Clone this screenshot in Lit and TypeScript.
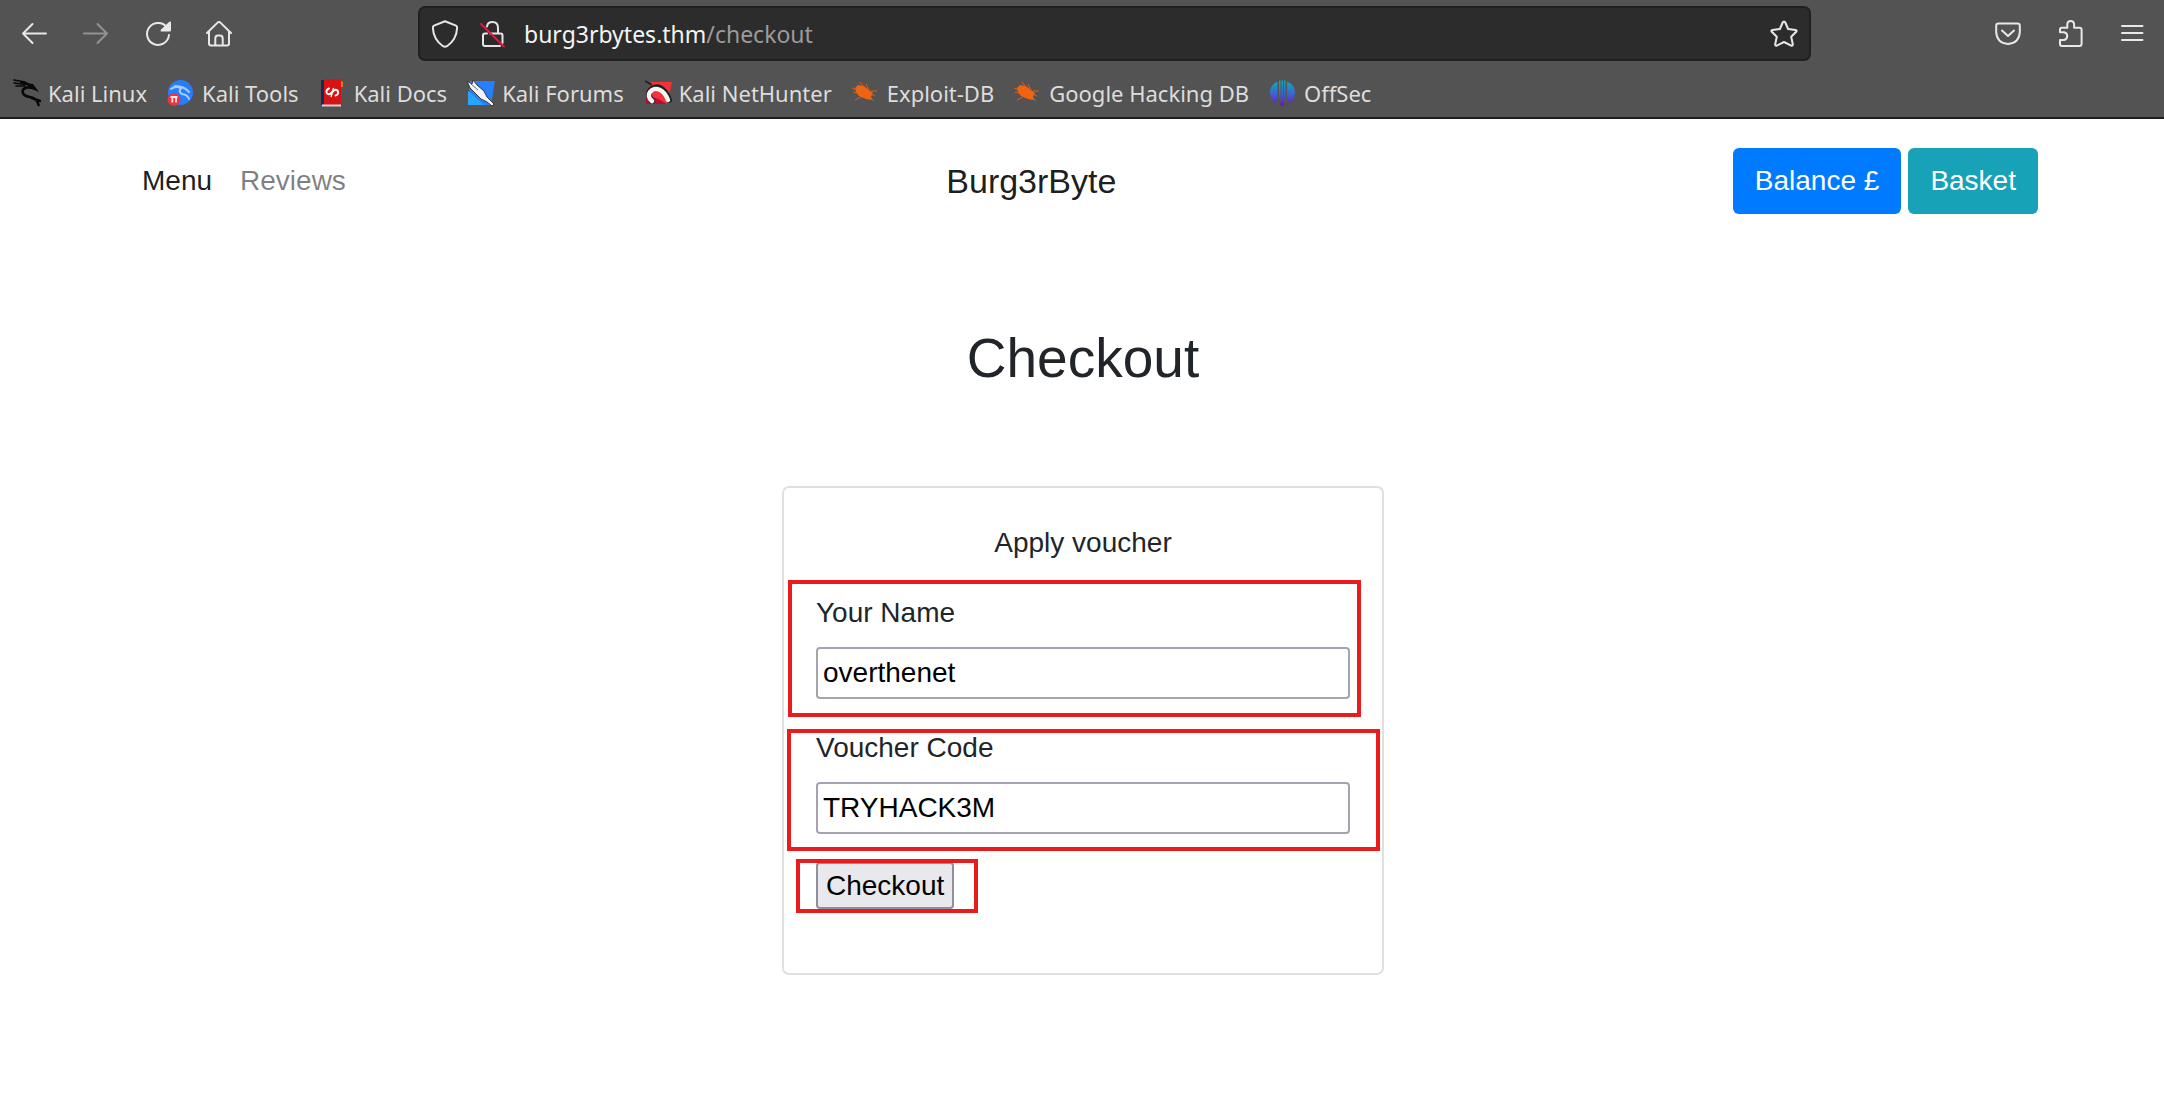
import { LitElement, html, css, svg, TemplateResult } from "lit";
import { customElement, property } from "lit/decorators.js";

const icons: Record<string, TemplateResult> = {
  back: svg`<path d="M27 14.5H4M13.5 5L4 14.5L13.5 24" />`,
  forward: svg`<path d="M3 14.5H26M16.5 5L26 14.5L16.5 24" />`,
  reload: svg`<path d="M24.6 9.5A11 11 0 1 0 26 16" /><path class="solid" d="M27 3.5V11.5H18.5Z" />`,
  home: svg`<path d="M2 14L12.6 3.6Q14 2.4 15.4 3.6L26 14M4 12.5V24.5Q4 26.5 6 26.5H22Q24 26.5 24 24.5V12.5M10.3 26V19.5Q10.3 16.5 13 16.5H15Q17.7 16.5 17.7 19.5V26" />`,
  shield: svg`<path d="M15 2.2L26 6.6Q27.3 7.2 27.1 9Q26.6 20.5 17 27.2Q15 28.3 13 27.2Q3.4 20.5 2.9 9Q2.7 7.2 4 6.6Z" />`,
  lock: svg`<path d="M9 7.5Q9.5 3 14.5 3Q20 3 20 9V14M12 14.5H22.5Q24.5 14.5 24.5 16.5V24M22 27H7Q5 27 5 25V16.5Q5 14.5 7 14.5H9" /><path class="cut" d="M3 5L26 27.5" />`,
  star: svg`<path d="M15 2.5Q15.8 2.5 16.3 3.5L19.1 10L26.5 10.9Q28.4 11.4 27.2 12.8L22.2 17.8L23.8 25.2Q23.9 27.2 22.2 26.6L15 23L7.8 26.6Q6.1 27.2 6.2 25.2L7.8 17.8L2.8 12.8Q1.6 11.4 3.5 10.9L10.9 10L13.7 3.5Q14.2 2.5 15 2.5Z" />`,
  pocket: svg`<path d="M5.5 4.5H24.5Q26.8 4.5 26.8 6.8V13Q26.3 24 15 25Q3.7 24 3.2 13V6.8Q3.2 4.5 5.5 4.5Z" /><path d="M9 11.5L15 17L21 11.5" />`,
  puzzle: svg`<path d="M5 12V10.5Q5 8.8 6.8 8.8H12.3V5Q12.6 2 15.7 2Q18.8 2 19.1 5V8.8H24.5Q26.6 8.8 26.6 10.8V24.5Q26.6 27 24.5 27H7Q5 27 5 25V21H9Q12.2 20.4 12.2 17Q12.2 13.8 9 13.2H5Z" />`,
  menu: svg`<path d="M5 7H25.5M5 14H25.5M5 21H25.5" />`,
};

const favicons: Record<string, TemplateResult> = {
  kali: svg`
    <path fill="none" stroke="#080808" stroke-width="1.6" stroke-linecap="round" d="M1 1L12 3M1 4L12 5.5M3 7L12 7" />
    <path fill="none" stroke="#080808" stroke-width="2.6" stroke-linecap="round" d="M8 3Q15 4 20 9Q11 7 9.5 12Q9.5 17 17 18Q24 19 25.5 26M19 19L27 22" />
    <path fill="#080808" d="M12 4L20 5L26 13L18 9.5Z" />`,
  tools: svg`
    <circle cx="13.5" cy="13.5" r="12.5" fill="#277dfa" />
    <path fill="none" stroke="#a5cdfd" stroke-width="2" stroke-linecap="round" d="M8 7Q17 7 22 13M4 10Q9 6 14 9.5Q11 13 15 15Q21 16 22 20" />
    <circle cx="7" cy="20.5" r="6.5" fill="#ec343e" />
    <path fill="none" stroke="#ffe4e4" stroke-width="1.8" d="M3.5 18H10.5M5.3 18V23.5M9 18V23.5" />`,
  docs: svg`
    <path fill="#1d2858" d="M2 1H6V25L2 26Z" />
    <path fill="#d81313" d="M5 0H22V26H5Z" />
    <path fill="#d6d6df" d="M3 25.5H22V27.5H3Z" />
    <path fill="#e07c1c" d="M22 2L24 3V8H22Z" />
    <path fill="none" stroke="#fff" stroke-width="2" stroke-linecap="round" d="M10 9.5Q6.5 11 7.8 14Q9.5 17 13 13.200Q17 9 18.800 12Q20 15.500 16.500 16.500" />
    <path fill="none" stroke="#fff" stroke-width="1.4" d="M14.500 9L12 18" />`,
  forums: svg`
    <path fill="#2680fb" d="M3 2H28L24 26H1Z" />
    <path fill="#29a5ff" d="M1 12L17 26H1Z" />
    <path fill="#f3f3f3" stroke="#303641" stroke-width="1" d="M0 2L5 5L6 1L10 6L17 12L20 18L27 25L25 27L20 23L14 20L9 15L3 9Z" />
    <path fill="none" stroke="#636d79" d="M4 5L11 11" />`,
  nethunter: svg`
    <path fill="#f63138" d="M7 3H28L23 25H2Z" />
    <path fill="#b50f32" d="M2 15L16 21L23 25H2Z" />
    <path fill="none" stroke="#202020" stroke-width="6" stroke-linecap="round" d="M8 22C0 14 9 6 16 9Q22 12 25 21" />
    <path fill="none" stroke="#f7f7f7" stroke-width="4.5" stroke-linecap="round" d="M8 22C0 15 9 8 15 10.5Q21 13 24 21" />
    <path fill="none" stroke="#202020" stroke-width="2" d="M1 2L8 6" />`,
  bug: svg`
    <path fill="#ef6411" d="M3 9L6 6L12 7L17 11L21 14L19 18L20 21L14 20L7 17L4 13Z" />
    <path fill="none" stroke="#d66120" stroke-width="1" d="M0 9L5 11M8 3L12 8M14 5L17 11M19 12L25 12M19 15L23 17M19 19L22 22M9 18L3 21M5 14L1 13" />`,
  offsec: svg`
    <defs><linearGradient id="ink" x1="0" y1="0" x2="0" y2="28" gradientUnits="userSpaceOnUse">
      <stop offset="0.1" stop-color="#12a6bd" /><stop offset="0.55" stop-color="#3d62cf" /><stop offset="0.95" stop-color="#6816d2" />
    </linearGradient></defs>
    <path fill="url(#ink)" d="M8.5 2.5V20L6 24Q1 20 1 13Q1 6 8.5 2.5ZM18 2.5Q26 6 26 13Q26 20 21 24L18 20ZM10 1.5H11.5V20H10ZM15 1.5H16.5V20H15ZM12.5 1.5H14V24H12.5Z" />
    <circle cx="13.2" cy="25" r="2" fill="#6816d2" />`,
};

const bookmarks = [
  { label: "Kali Linux", icon: "kali" },
  { label: "Kali Tools", icon: "tools" },
  { label: "Kali Docs", icon: "docs" },
  { label: "Kali Forums", icon: "forums" },
  { label: "Kali NetHunter", icon: "nethunter" },
  { label: "Exploit-DB", icon: "bug" },
  { label: "Google Hacking DB", icon: "bug" },
  { label: "OffSec", icon: "offsec" },
];

@customElement("line-icon")
class LineIcon extends LitElement {
  @property() name = "";
  static styles = css`
    :host { display: block; width: 30px; height: 30px; }
    .glyph { display: block; width: 30px; height: 30px; fill: none; stroke: currentColor; stroke-width: 2; stroke-linejoin: round; stroke-linecap: round; }
    .solid { fill: currentColor; }
    .cut { stroke: #d81e42; }
  `;
  render() {
    return html`<svg class="glyph" viewBox="0 0 30 30" aria-hidden="true">${icons[this.name]}</svg>`;
  }
}

@customElement("browser-bar")
class BrowserBar extends LitElement {
  static styles = css`
    :host { display: block; background: #535353; border-bottom: 2px solid #1e1e1e; font-family: "Noto Sans", sans-serif; color: #e6e6e6; }
    .row { display: flex; align-items: center; padding: 6px 17px 0 19px; }
    .group { display: flex; gap: 32px; }
    .tool { border: 0; padding: 0; background: none; color: #e8e8e8; }
    .tool:disabled { color: #929292; }
    .url { flex: 1; display: flex; align-items: center; margin: 0 182px 0 183px; height: 55px; box-sizing: border-box; padding: 0 10px; background: #2c2c2c; border: 2px solid #202020; border-radius: 7px; font-size: 23px; }
    .lock { margin-left: 18px; }
    .address { flex: 1; margin-left: 16px; color: #f4f4f4; }
    .path { color: #9b9b9b; }
    .marks { display: flex; gap: 20px; padding: 16px 13px 8px; }
    .mark { display: flex; align-items: center; gap: 7px; height: 32px; color: #dddddd; font-size: 22px; text-decoration: none; white-space: nowrap; }
    .fav { width: 28px; height: 28px; }
  `;
  render() {
    return html`
      <div class="row">
        <div class="group">
          <button class="tool" aria-label="Back"><line-icon name="back"></line-icon></button>
          <button class="tool" aria-label="Forward" disabled><line-icon name="forward"></line-icon></button>
          <button class="tool" aria-label="Reload"><line-icon name="reload"></line-icon></button>
          <button class="tool" aria-label="Home"><line-icon name="home"></line-icon></button>
        </div>
        <div class="url">
          <line-icon name="shield"></line-icon>
          <line-icon class="lock" name="lock"></line-icon>
          <div class="address">burg3rbytes.thm<span class="path">/checkout</span></div>
          <button class="tool" aria-label="Bookmark"><line-icon name="star"></line-icon></button>
        </div>
        <div class="group">
          <button class="tool" aria-label="Pocket"><line-icon name="pocket"></line-icon></button>
          <button class="tool" aria-label="Extensions"><line-icon name="puzzle"></line-icon></button>
          <button class="tool" aria-label="Menu"><line-icon name="menu"></line-icon></button>
        </div>
      </div>
      <nav class="marks">
        ${bookmarks.map((b) => html`
          <a class="mark" href="#"><svg class="fav" viewBox="0 0 28 28" aria-hidden="true">${favicons[b.icon]}</svg>${b.label}</a>`)}
      </nav>`;
  }
}

@customElement("app-root")
class AppRoot extends LitElement {
  static styles = css`
    :host { display: block; min-height: 100vh; background: #fff; color: #212529; font-family: "Liberation Sans", Arial, sans-serif; font-size: 28px; line-height: 42px; }
    .nav { display: flex; align-items: center; justify-content: space-between; padding: 29px 126px 28px 128px; }
    .links, .actions { display: flex; }
    .actions { gap: 7px; }
    .link { padding: 0 14px; color: rgba(0, 0, 0, 0.5); text-decoration: none; }
    .current, .brand { color: rgba(0, 0, 0, 0.9); }
    .brand { margin-right: 30px; font-size: 34px; text-decoration: none; }
    .btn { padding: 12px 22px; border: 0; border-radius: 6px; color: #fff; font: inherit; }
    .balance { background: #007bff; }
    .basket { background: #17a2b8; }
    .main { display: flex; flex-direction: column; align-items: center; padding: 83px 0 96px 2px; }
    .title { margin: 0 0 94px; font-size: 55px; font-weight: 400; line-height: 67px; }
    .card { display: flex; flex-direction: column; gap: 28px; width: 100%; max-width: 602px; box-sizing: border-box; padding: 34px 32px 64px; border: 2px solid #e0e0e0; border-radius: 7px; }
    .lead { margin: 0; text-align: center; }
    .field { position: relative; display: flex; flex-direction: column; gap: 13px; }
    .submit { position: relative; align-self: flex-start; display: flex; }
    .input { height: 52px; box-sizing: border-box; padding: 0 5px; border: 2px solid #a4a3b0; border-radius: 4px; background: #fff; color: #000; font: inherit; }
    .go { height: 47px; padding: 0 8px; border: 2px solid #8f8f9d; border-radius: 4px; background: #e9e9ed; color: #000; font: inherit; line-height: 40px; }
    .frame { position: absolute; border: 4px solid #e81c1c; pointer-events: none; }
    .frame-name { inset: -12px -11px -18px -28px; }
    .frame-code { inset: 2px -30px -17px -29px; }
    .frame-go { inset: -3px -24px -4px -20px; }
  `;
  render() {
    return html`
      <browser-bar></browser-bar>
      <header class="nav">
        <nav class="links">
          <a class="link current" href="#">Menu</a>
          <a class="link" href="#">Reviews</a>
        </nav>
        <a class="brand" href="#">Burg3rByte</a>
        <div class="actions">
          <button class="btn balance">Balance £</button>
          <button class="btn basket">Basket</button>
        </div>
      </header>
      <main class="main">
        <h1 class="title">Checkout</h1>
        <form class="card" @submit=${(e: Event) => e.preventDefault()}>
          <p class="lead">Apply voucher</p>
          <div class="field">
            <label for="name">Your Name</label>
            <input class="input" id="name" type="text" .value=${"overthenet"} />
            <span class="frame frame-name"></span>
          </div>
          <div class="field">
            <label for="code">Voucher Code</label>
            <input class="input" id="code" type="text" .value=${"TRYHACK3M"} />
            <span class="frame frame-code"></span>
          </div>
          <div class="submit">
            <button class="go" type="submit">Checkout</button>
            <span class="frame frame-go"></span>
          </div>
        </form>
      </main>`;
  }
}
